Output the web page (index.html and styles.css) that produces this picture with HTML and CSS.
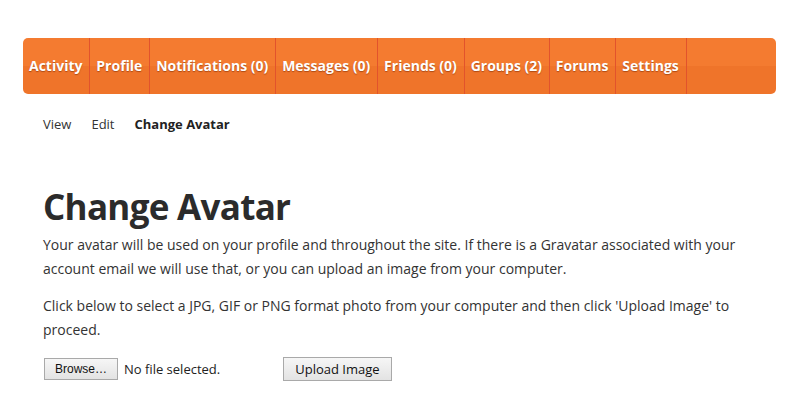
FILE: index.html
```html
<!DOCTYPE html>
<html>
<head>
<meta charset="utf-8">
<link rel="stylesheet" href="styles.css">
</head>
<body>
<div class="page">
  <nav class="mainnav">
    <a class="item">Activity</a>
    <a class="item">Profile</a>
    <a class="item">Notifications (0)</a>
    <a class="item">Messages (0)</a>
    <a class="item">Friends (0)</a>
    <a class="item">Groups (2)</a>
    <a class="item">Forums</a>
    <a class="item">Settings</a>
  </nav>
  <div class="content">
    <ul class="subnav">
      <li>View</li>
      <li>Edit</li>
      <li class="current">Change Avatar</li>
    </ul>
    <h1 class="title">Change Avatar</h1>
    <p class="text">Your avatar will be used on your profile and throughout the site. If there is a Gravatar associated with your account email we will use that, or you can upload an image from your computer.</p>
    <p class="text">Click below to select a JPG, GIF or PNG format photo from your computer and then click 'Upload Image' to proceed.</p>
    <div class="upload">
      <div class="file">
        <span class="browse">Browse…</span>
        <span class="nofile">No file selected.</span>
      </div>
      <span class="btn">Upload Image</span>
    </div>
  </div>
</div>
</body>
</html>
```

FILE: styles.css
```css
html, body {
  margin: 0;
  padding: 0;
  background: #fff;
}
body {
  font-family: "Open Sans", "Liberation Sans", sans-serif;
  color: #333;
}
.page {
  padding: 38px 14px 0 23px;
}
.mainnav {
  display: flex;
  height: 56px;
  border-radius: 5px;
  background: linear-gradient(to bottom, #f47b30 0, #f47b30 50%, #ef742a 50%, #ef742a 100%);
  overflow: hidden;
}
.mainnav .item {
  display: flex;
  align-items: center;
  padding: 0 6.85px 2px 6px;
  border-right: 1px solid #e2532c;
  color: #fff;
  font-weight: 700;
  font-size: 14px;
  text-shadow: 0 1px 1px rgba(120, 40, 0, 0.55);
  white-space: nowrap;
}
.content {
  padding: 0 0 0 20px;
}
.subnav {
  list-style: none;
  margin: 0;
  padding: 21px 0 0 0;
  display: flex;
  gap: 20px;
  font-size: 13px;
  line-height: 18px;
  color: #333;
}
.subnav .current {
  font-weight: 700;
  color: #222;
}
.title {
  margin: 51px 0 0 0;
  font-size: 35px;
  line-height: 46px;
  letter-spacing: -0.7px;
  font-weight: 700;
  color: #2b2b2b;
}
.text {
  margin: 3px 0 0 0;
  font-size: 14px;
  line-height: 24px;
  color: #333;
}
.text + .text {
  margin-top: 13px;
}
.upload {
  display: flex;
  align-items: center;
  gap: 63px;
  margin-top: 15px;
}
.file {
  display: flex;
  align-items: center;
  gap: 6px;
  margin-left: 1px;
}
.browse {
  display: inline-block;
  height: 20px;
  line-height: 20px;
  padding: 0 10px;
  border: 1px solid #a9a9a9;
  background: linear-gradient(to bottom, #f6f6f6, #e3e3e3);
  font-family: "Liberation Sans", Arial, sans-serif;
  font-size: 12px;
  color: #111;
}
.nofile {
  font-size: 13px;
  color: #222;
}
.btn {
  display: inline-block;
  height: 22px;
  line-height: 22px;
  padding: 0 11px;
  border: 1px solid #a9a9a9;
  background: linear-gradient(to bottom, #f6f6f6, #e3e3e3);
  font-size: 13px;
  color: #111;
}
```
